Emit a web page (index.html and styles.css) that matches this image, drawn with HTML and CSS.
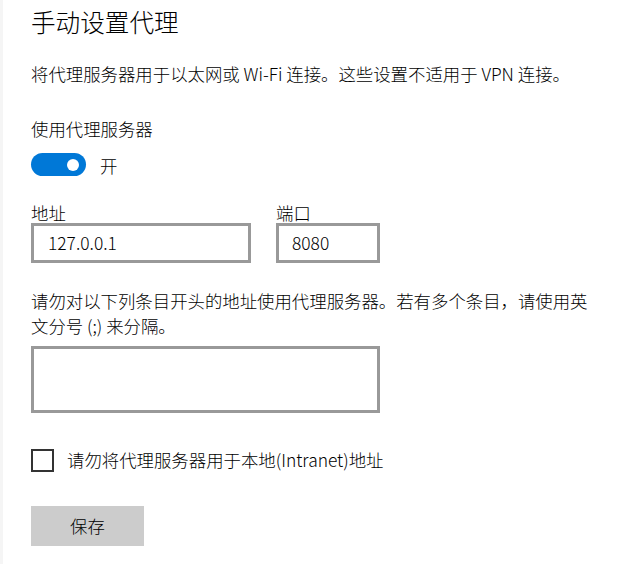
FILE: index.html
```html
<!DOCTYPE html>
<html lang="zh-CN">
<head>
<meta charset="utf-8">
<title>手动设置代理</title>
<link rel="stylesheet" href="styles.css">
</head>
<body>
<main class="page">
  <h1 class="title">手动设置代理</h1>
  <p class="desc">将代理服务器用于以太网或 Wi-Fi 连接。这些设置不适用于 VPN 连接。</p>
  <div class="label">使用代理服务器</div>
  <div class="toggle-row">
    <span class="toggle"><span class="thumb"></span></span>
    <span class="toggle-text">开</span>
  </div>
  <div class="fields">
    <div class="field">
      <div class="field-label">地址</div>
      <div class="input addr">127.0.0.1</div>
    </div>
    <div class="field">
      <div class="field-label">端口</div>
      <div class="input port">8080</div>
    </div>
  </div>
  <p class="para">请勿对以下列条目开头的地址使用代理服务器。若有多个条目，请使用英文分号 (;) 来分隔。</p>
  <div class="textarea"></div>
  <div class="check-row">
    <span class="checkbox"></span>
    <span class="check-text">请勿将代理服务器用于本地(Intranet)地址</span>
  </div>
  <div class="button">保存</div>
</main>
</body>
</html>
```
FILE: styles.css
```css
html, body {
  margin: 0;
  padding: 0;
  background: #ffffff;
}
body {
  font-family: "Noto Sans CJK SC", "Noto Sans", sans-serif;
  font-weight: 300;
  color: #000;
  font-size: 17.4px;
  border-left: 3px solid #f5f5f5;
  min-height: 564px;
  box-sizing: border-box;
}
.page {
  padding-left: 28px;
  display: flex;
  flex-direction: column;
  align-items: flex-start;
}
.title {
  margin: 0;
  padding-top: 4px;
  font-size: 24.6px;
  font-weight: 300;
  line-height: 34px;
}
.desc {
  margin: 24px 0 0;
  line-height: 24px;
  white-space: nowrap;
}
.label {
  margin-top: 31px;
  line-height: 24px;
}
.toggle-row {
  margin-top: 12px;
  display: flex;
  align-items: center;
  height: 23px;
}
.toggle {
  width: 55px;
  height: 23px;
  border-radius: 12px;
  background: #0078d7;
  display: flex;
  align-items: center;
  justify-content: flex-end;
  padding-right: 7px;
  box-sizing: border-box;
}
.thumb {
  width: 12px;
  height: 12px;
  border-radius: 50%;
  background: #fff;
}
.toggle-text {
  margin-left: 14px;
  line-height: 24px;
  padding-top: 2px;
}
.fields {
  margin-top: 27px;
  display: flex;
  gap: 25px;
}
.field-label {
  line-height: 20px;
}
.input {
  height: 40px;
  border: 3px solid #999999;
  box-sizing: border-box;
  display: flex;
  align-items: center;
  padding-left: 14px;
  line-height: 20px;
}
.addr { width: 220px; }
.port { width: 104px; padding-left: 13px; }
.para {
  margin: 25px 0 0;
  width: 568px;
  line-height: 25px;
}
.textarea {
  margin-top: 8px;
  width: 349px;
  height: 67px;
  border: 3px solid #999999;
  box-sizing: border-box;
}
.check-row {
  margin-top: 35px;
  display: flex;
  align-items: center;
}
.checkbox {
  width: 23px;
  height: 23px;
  border: 2px solid #333333;
  box-sizing: border-box;
}
.check-text {
  margin-left: 13px;
  line-height: 24px;
}
.button {
  margin-top: 34px;
  width: 113px;
  height: 40px;
  background: #cccccc;
  display: flex;
  align-items: center;
  justify-content: center;
  line-height: 24px;
}
```
